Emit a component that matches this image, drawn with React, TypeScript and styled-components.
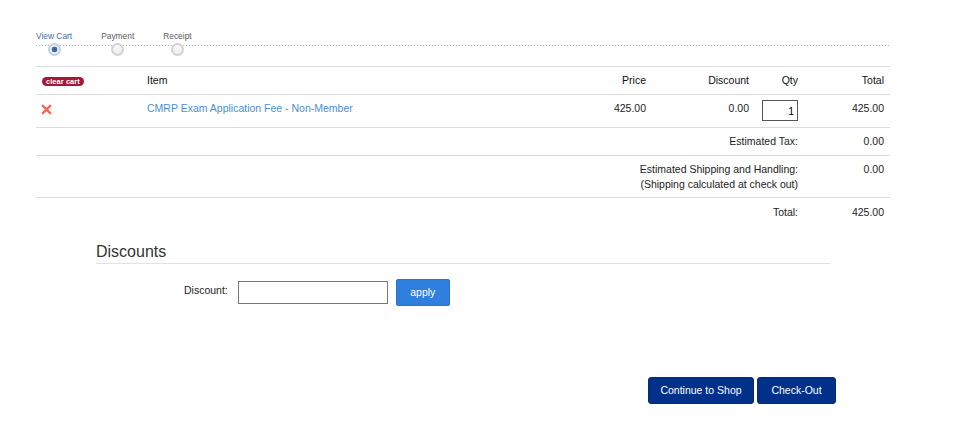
import styled, { createGlobalStyle } from 'styled-components';

const GlobalStyle = createGlobalStyle`
  body {
    margin: 0;
    background: #fff;
    font-family: 'Liberation Sans', Arial, sans-serif;
    color: #222;
  }
`;

type Step = { label: string; active?: boolean };

const steps: Step[] = [
  { label: 'View Cart', active: true },
  { label: 'Payment' },
  { label: 'Receipt' },
];

const App = () => {
  return (
    <Page>
      <GlobalStyle />
      <Steps>
        {steps.map((s) => (
          <StepItem key={s.label}>
            <StepLabel $active={s.active}>{s.label}</StepLabel>
            <StepDot $active={s.active} />
          </StepItem>
        ))}
      </Steps>

      <CartTable>
        <colgroup>
          <col style={{ width: 104 }} />
          <col style={{ width: 420 }} />
          <col style={{ width: 92 }} />
          <col style={{ width: 103 }} />
          <col style={{ width: 49 }} />
          <col style={{ width: 86 }} />
        </colgroup>
        <thead>
          <HeadRow>
            <Cell>
              <ClearBadge>clear cart</ClearBadge>
            </Cell>
            <Cell>Item</Cell>
            <NumCell>Price</NumCell>
            <NumCell>Discount</NumCell>
            <NumCell>Qty</NumCell>
            <NumCell>Total</NumCell>
          </HeadRow>
        </thead>
        <tbody>
          <ItemRow>
            <Cell>
              <RemoveIcon viewBox="0 0 12 12">
                <path d="M2 2 L10 10 M10 2 L2 10" stroke="#f26b52" strokeWidth="2.6" strokeLinecap="round" />
              </RemoveIcon>
            </Cell>
            <Cell>
              <ItemLink href="#">CMRP Exam Application Fee - Non-Member</ItemLink>
            </Cell>
            <NumCell>425.00</NumCell>
            <NumCell>0.00</NumCell>
            <NumCell>
              <QtyInput defaultValue="1" />
            </NumCell>
            <NumCell>425.00</NumCell>
          </ItemRow>
          <SummaryRow>
            <NumCell colSpan={5}>Estimated Tax:</NumCell>
            <NumCell>0.00</NumCell>
          </SummaryRow>
          <SummaryRow $tall>
            <NumCell colSpan={5}>
              Estimated Shipping and Handling:
              <br />
              (Shipping calculated at check out)
            </NumCell>
            <NumCell>0.00</NumCell>
          </SummaryRow>
          <TotalRow>
            <NumCell colSpan={5}>Total:</NumCell>
            <NumCell>425.00</NumCell>
          </TotalRow>
        </tbody>
      </CartTable>

      <Discounts>
        <DiscountTitle>Discounts</DiscountTitle>
        <DiscountForm>
          <DiscountLabel>Discount:</DiscountLabel>
          <DiscountInput />
          <ApplyButton>apply</ApplyButton>
        </DiscountForm>
      </Discounts>

      <Actions>
        <NavyButton $width={106}>Continue to Shop</NavyButton>
        <NavyButton $width={79}>Check-Out</NavyButton>
      </Actions>
    </Page>
  );
};

const Page = styled.div`
  width: 854px;
  padding: 31px 0 0 36px;
  font-size: 10.5px;
`;

const Steps = styled.div`
  display: flex;
  gap: 29px;
  height: 30px;
  background-image: linear-gradient(to right, #b4b4b4 50%, transparent 50%);
  background-size: 3px 1px;
  background-repeat: repeat-x;
  background-position: 0 14px;
  margin-bottom: 5px;
`;

const StepItem = styled.div`
  display: flex;
  flex-direction: column;
  align-items: center;
`;

const StepLabel = styled.span<{ $active?: boolean }>`
  font-size: 8.4px;
  line-height: 11px;
  height: 12px;
  color: ${(p) => (p.$active ? '#4a6c9b' : '#5a5a5a')};
`;

const StepDot = styled.span<{ $active?: boolean }>`
  box-sizing: border-box;
  width: 13px;
  height: 13px;
  border-radius: 50%;
  border: 2px solid ${(p) => (p.$active ? '#bcd1e8' : '#d2d2d2')};
  background: ${(p) =>
    p.$active
      ? 'radial-gradient(circle, #45679a 0 2.6px, #eef3f9 3.2px)'
      : 'linear-gradient(#fafafa, #ececec)'};
`;

const CartTable = styled.table`
  width: 854px;
  table-layout: fixed;
  border-collapse: collapse;
  font-size: 10.5px;
`;

const Cell = styled.td`
  padding: 0 6px 0 7px;
  vertical-align: middle;
  text-align: left;
`;

const NumCell = styled.td`
  padding: 0 6px;
  text-align: right;
  vertical-align: middle;
`;

const HeadRow = styled.tr`
  height: 28px;
  border-top: 1px solid #dcdcdc;
  border-bottom: 1px solid #dcdcdc;
  color: #111;

  & > td {
    padding-bottom: 2px;
  }

  & > td:first-child {
    padding-left: 6px;
  }
`;

const ItemRow = styled.tr`
  height: 33px;
  border-bottom: 1px solid #dcdcdc;

  & > td {
    vertical-align: top;
    padding-top: 7px;
  }

  & > td:first-child {
    padding-left: 6px;
    padding-top: 9px;
  }

  & > td:nth-child(5) {
    padding-top: 5px;
  }
`;

const SummaryRow = styled.tr<{ $tall?: boolean }>`
  height: ${(p) => (p.$tall ? '42px' : '28px')};
  border-bottom: 1px solid #dcdcdc;
  line-height: 15px;

  & > td {
    vertical-align: ${(p) => (p.$tall ? 'top' : 'middle')};
    padding-top: ${(p) => (p.$tall ? '6px' : '0')};
  }
`;

const TotalRow = styled.tr`
  height: 28px;
`;

const ClearBadge = styled.span`
  display: inline-block;
  background: #a6173a;
  color: #fff;
  font-size: 7.4px;
  font-weight: bold;
  line-height: 9px;
  padding: 0 4px;
  border-radius: 5px;
  letter-spacing: 0.1px;
`;

const RemoveIcon = styled.svg`
  width: 11px;
  height: 11px;
  display: block;
  margin-left: -1px;
`;

const ItemLink = styled.a`
  color: #4a8fd6;
  text-decoration: none;
`;

const QtyInput = styled.input`
  width: 36px;
  height: 21px;
  box-sizing: border-box;
  border: 1px solid #555;
  text-align: right;
  font-family: inherit;
  font-size: 10.5px;
  padding: 0 3px;
  margin: 0;
  vertical-align: top;
`;

const Discounts = styled.section`
  width: 734px;
  margin: 16px 0 0 60px;
`;

const DiscountTitle = styled.h2`
  margin: 0;
  font-size: 16px;
  font-weight: normal;
  color: #333;
  line-height: 20px;
  padding-bottom: 1px;
  border-bottom: 1px solid #e2e2e2;
`;

const DiscountForm = styled.div`
  display: flex;
  align-items: center;
  margin-top: 15px;
  padding-left: 88px;
`;

const DiscountLabel = styled.label`
  font-size: 10.5px;
  color: #222;
  margin-right: 10px;
  margin-top: -5px;
`;

const DiscountInput = styled.input`
  width: 150px;
  height: 23px;
  box-sizing: border-box;
  border: 1px solid #777;
  margin: 0 8px 0 0;
`;

const ApplyButton = styled.button`
  width: 54px;
  height: 27px;
  background: #2f7fde;
  border: 1px solid #2a72c8;
  border-radius: 2px;
  color: #fff;
  font-family: inherit;
  font-size: 10.5px;
`;

const Actions = styled.div`
  display: flex;
  gap: 3px;
  justify-content: flex-end;
  width: 800px;
  margin-top: 71px;
`;

const NavyButton = styled.button<{ $width: number }>`
  width: ${(p) => p.$width}px;
  height: 27px;
  background: #00318a;
  border: 1px solid #0b2a66;
  border-radius: 3px;
  color: #fff;
  font-family: inherit;
  font-size: 10.5px;
`;

export default App;
